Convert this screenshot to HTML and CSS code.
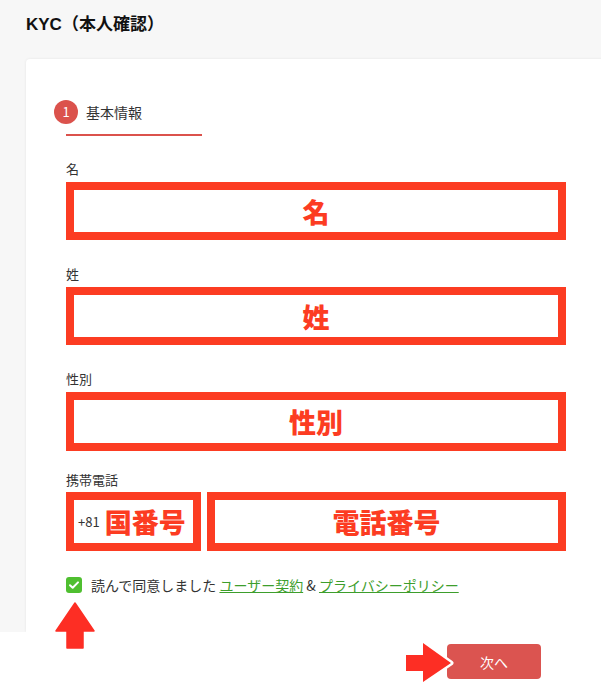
FILE: index.html
```html
<!DOCTYPE html>
<html lang="ja">
<head>
    <meta charset="UTF-8">
    <meta name="viewport" content="width=device-width, initial-scale=1.0">
    <title>KYC（本人確認）</title>
    <link rel="stylesheet" href="styles.css">
</head>
<body>
    <div class="page">
        <div class="main">
            <h1 class="page-title">KYC（本人確認）</h1>

            <div class="card">
                <div class="steps">
                    <div class="step active">
                        <span class="step-num">1</span>
                        <span class="step-name">基本情報</span>
                    </div>
                </div>

                <form class="kyc-form">
                    <div class="form-group">
                        <label>名</label>
                        <div class="mark">名</div>
                    </div>
                    <div class="form-group">
                        <label>姓</label>
                        <div class="mark">姓</div>
                    </div>
                    <div class="form-group">
                        <label>性別</label>
                        <div class="mark mark-low">性別</div>
                    </div>
                    <div class="form-group">
                        <label>携帯電話</label>
                        <div class="phone-row">
                            <div class="mark mark-code">
                                <span class="code">+81</span>
                                <span>国番号</span>
                            </div>
                            <div class="mark mark-phone">電話番号</div>
                        </div>
                    </div>

                    <div class="agree">
                        <svg class="check" width="16" height="16" viewBox="0 0 16 16">
                            <rect width="16" height="16" rx="3" fill="#4fbf30"/>
                            <path d="M4 8.2l2.7 2.6L12 5.4" fill="none" stroke="#fff" stroke-width="2" stroke-linecap="round" stroke-linejoin="round"/>
                        </svg>
                        <span>読んで同意しました <a href="#">ユーザー契約</a> &amp; <a href="#">プライバシーポリシー</a></span>
                    </div>
                </form>
            </div>
        </div>

        <div class="footer">
            <button type="button" class="btn-next">次へ</button>
        </div>

        <!-- annotation arrows -->
        <svg class="arrow-up" width="40" height="48" viewBox="0 0 40 48">
            <path d="M20 1L39 29H28V46H12V29H1Z" fill="#fd2e24" stroke="#fd2e24" stroke-width="1.5" stroke-linejoin="round"/>
        </svg>
        <svg class="arrow-right" width="52" height="46" viewBox="0 0 52 46">
            <path d="M2 15H19V3L47 23L19 42V31H2Z" fill="#fd2e24" stroke="#fff" stroke-width="5" stroke-linejoin="round" paint-order="stroke"/>
        </svg>
    </div>
</body>
</html>
```

FILE: styles.css
```css
body {
    margin: 0;
    padding: 0;
    font-family: "Noto Sans CJK JP", sans-serif;
    color: #333;
    background-color: #fff;
}

.page {
    position: relative;
    height: 692px;
    overflow: hidden;
}

.main {
    height: 632px;
    background-color: #f7f7f7;
    display: flex;
    flex-direction: column;
    overflow: hidden;
}

.page-title {
    margin: 0;
    padding: 13px 26px 0;
    font-family: "Liberation Sans", "Noto Sans CJK JP", sans-serif;
    font-size: 17px;
    line-height: 24px;
    font-weight: bold;
    color: #111;
}

.card {
    flex: 1;
    margin: 22px -10px 0 26px;
    padding: 41px 0 0 40px;
    background: #fff;
    border-radius: 4px 4px 0 0;
    box-shadow: 0 0 3px rgba(0, 0, 0, 0.08);
}

.steps {
    width: 136px;
}

.step {
    display: flex;
    align-items: center;
    height: 24px;
    padding-bottom: 10px;
    border-bottom: 2px solid #db524c;
}

.step-num {
    width: 24px;
    height: 24px;
    margin-left: -12px;
    border-radius: 50%;
    background-color: #db524c;
    color: white;
    font-size: 13px;
    line-height: 24px;
    text-align: center;
}

.step-name {
    margin-left: 8px;
    font-size: 14px;
}

.kyc-form {
    width: 500px;
    padding-top: 24px;
}

.form-group {
    margin-bottom: 25px;
}

.form-group label {
    display: block;
    font-size: 13px;
    line-height: 18px;
    margin-bottom: 4px;
}

.mark {
    box-sizing: border-box;
    height: 58px;
    border: 8px solid #fc3c22;
    background: #fff;
    color: #fc3c22;
    font-size: 27px;
    font-weight: 900;
    display: flex;
    align-items: center;
    justify-content: center;
}

.mark-low {
    height: 59px;
    margin-top: 4px;
    margin-bottom: -5px;
}

.phone-row {
    display: flex;
    gap: 6px;
    margin-top: -1px;
}

.mark-code {
    width: 135px;
    height: 59px;
    justify-content: flex-start;
    padding-left: 4px;
}

.mark-code .code {
    font-size: 13px;
    font-weight: normal;
    color: #333;
    margin-right: 5px;
}

.mark-phone {
    flex: 1;
    height: 59px;
}

.agree {
    display: flex;
    align-items: center;
    gap: 9px;
    font-size: 14px;
    line-height: 18px;
    margin-top: 1px;
}

.agree a {
    color: #3d9e2c;
    text-decoration: underline;
}

.footer {
    height: 60px;
    display: flex;
    justify-content: flex-end;
    padding: 12px 60px 0 0;
    box-sizing: border-box;
}

.btn-next {
    width: 94px;
    height: 35px;
    border: none;
    border-radius: 4px;
    background-color: #db5450;
    color: white;
    font-family: "Noto Sans CJK JP", sans-serif;
    font-size: 14px;
    cursor: pointer;
}

.arrow-up {
    position: absolute;
    left: 55px;
    top: 602px;
}

.arrow-right {
    position: absolute;
    left: 404px;
    top: 640px;
}
```
